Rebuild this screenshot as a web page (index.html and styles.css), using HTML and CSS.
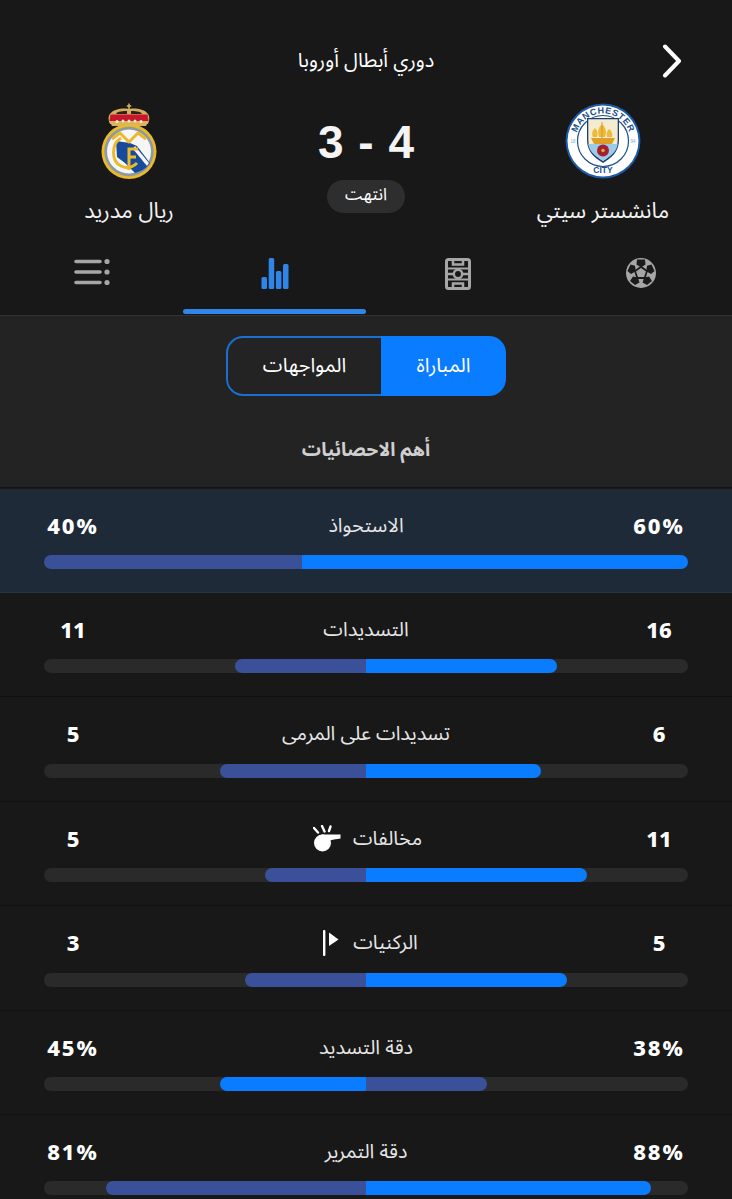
FILE: index.html
```html
<!DOCTYPE html>
<html lang="ar" dir="rtl">
<head>
<meta charset="utf-8">
<title>دوري أبطال أوروبا</title>
<link rel="stylesheet" href="styles.css">
</head>
<body>
<div class="page">
  <header class="match">
    <div class="league">
      <svg class="back" viewBox="0 0 20 34" width="20" height="34"><path d="M3 2.500 L17 17 L3 31.500" fill="none" stroke="#fff" stroke-width="4" stroke-linecap="round" stroke-linejoin="round"/></svg>
      <span>دوري أبطال أوروبا</span>
    </div>
    <div class="teams">
      <div class="team">
        <svg class="crest" viewBox="0 0 76 76" width="76" height="76">
          <defs><path id="arcTop" d="M10.500 38 A27.500 27.500 0 0 1 65.500 38"/></defs>
          <circle cx="38" cy="38" r="37.500" fill="#1c5aa6"/>
          <circle cx="38" cy="38" r="35.500" fill="#fff"/>
          <circle cx="38" cy="38" r="25.500" fill="#fff" stroke="#1c4f8c" stroke-width="1.200"/>
          <path d="M22 15 H54 V37 C54 49 46 55 38 60 C30 55 22 49 22 37 Z" fill="#1b3e70"/>
          <path d="M23.300 16.300 H52.700 V37 C52.700 48 45 53.500 38 58 C31 53.500 23.300 48 23.300 37 Z" fill="#f4ecd0"/>
          <path d="M23.300 41 H52.700 C51.700 49 45 53.500 38 58 C31 53.500 24.300 49 23.300 41 Z" fill="#9ccbe9"/>
          <path d="M26 35 H50 L47 41 H29 Z" fill="#dd9f25"/>
          <path d="M28 34 C26 30 28 27 30 25 C33 28 33 31 32 34 Z M34 34 C32 28 34 24 37 21 C41 25 42 29 40 34 Z M42 34 C41 30 42 28 44 26 C47 28 48 31 47 34 Z" fill="#f0b93a"/>
          <path d="M37 19 V35" stroke="#c88d1e" stroke-width="0.800"/>
          <circle cx="38" cy="47.500" r="6" fill="#a51e33"/>
          <circle cx="38" cy="47.500" r="1.800" fill="#e2a92b"/>
          <text class="city-ring" font-size="9" letter-spacing="0.600" direction="ltr"><textPath href="#arcTop" startOffset="50%" text-anchor="middle">MANCHESTER</textPath></text>
          <text class="city-ring" x="38" y="70" font-size="8.500" text-anchor="middle" direction="ltr">CITY</text>
          <text class="city-year" x="8" y="40" font-size="4.500" text-anchor="middle" direction="ltr">18</text>
          <text class="city-year" x="68" y="40" font-size="4.500" text-anchor="middle" direction="ltr">94</text>
        </svg>
        <div class="team-name">مانشستر سيتي</div>
      </div>
      <div class="center">
        <div class="score">3 - 4</div>
        <div class="status">انتهت</div>
      </div>
      <div class="team">
        <svg class="crest" viewBox="0 0 60 76" width="60" height="76">
          <path d="M11 21 C5 8 20 4 30 6 C40 4 55 8 49 21 Z" fill="#d2ad5e"/>
          <path d="M17 11 C18 8 25 8 28 8 V11 Z M32 8 C35 8 42 8 43 11 H32 Z" fill="#2a2418"/>
          <path d="M11.500 11.500 H48.500 L49.500 18 H10.500 Z" fill="#c9162f"/>
          <path d="M10.500 18 H49.500 L47 23 H13 Z" fill="#d9b55f"/>
          <path d="M30 0.500 V7 M27.800 3 H32.200" stroke="#d9b55f" stroke-width="1.500"/>
          <circle cx="18" cy="18.500" r="1.500" fill="#f4ecd4"/><circle cx="24" cy="18" r="1.500" fill="#f4ecd4"/><circle cx="30" cy="18" r="1.500" fill="#f4ecd4"/><circle cx="36" cy="18" r="1.500" fill="#f4ecd4"/><circle cx="42" cy="18.500" r="1.500" fill="#f4ecd4"/>
          <circle cx="30" cy="48.500" r="27.500" fill="#eab92d"/>
          <circle cx="30" cy="48.500" r="24.700" fill="#8d9aa0"/>
          <circle cx="30" cy="48.500" r="22" fill="#f6f6f6"/>
          <path d="M17 38 L31 40 L38 43 L51 60 C48 65 43 68 36 70 L26 60 L18 54 Z" fill="#174a9a"/>
          <path d="M36 43 L50 60 L48 63 L34 46 Z" fill="#f6f6f6"/>
          <path d="M13 36 L21 30 L30 39 L39 30 L47 36" fill="none" stroke="#eab92d" stroke-width="3" stroke-linejoin="round"/>
          <path d="M22 35 C12 41 12 58 22 63 C28 66 33 65 38 60" fill="none" stroke="#eab92d" stroke-width="3"/>
          <path d="M30 67 V46 H39 M30 54 H37" fill="none" stroke="#eab92d" stroke-width="3"/>
        </svg>
        <div class="team-name">ريال مدريد</div>
      </div>
    </div>
    <nav class="tabs">
      <div class="tab">
        <svg viewBox="0 0 30 30" width="30" height="30">
          <circle cx="15" cy="15" r="15" fill="#a6a6a6"/>
          <path d="M15 9.500 L10.500 6.500 L11 1.500 L19 1.500 L19.500 6.500 Z M20.200 13.300 L21 7.800 L25.500 6.500 L28.500 13 L25 16 Z M18.200 19.400 L23 18.500 L26 23 L21 27 L16.500 24.500 Z M11.800 19.400 L13.500 24.500 L9 27 L4 23 L7 18.500 Z M9.800 13.300 L5 16 L1.500 13 L4.500 6.500 L9 7.800 Z" fill="#1b1b1b"/>
          <path d="M15 9.500 L20.200 13.300 L18.200 19.400 H11.800 L9.800 13.300 Z" fill="#1b1b1b" stroke="#1b1b1b" stroke-width="3"/>
          <path d="M15 10 L20 13.500 L18 19 H12 L10 13.500 Z" fill="#a6a6a6"/>
        </svg>
      </div>
      <div class="tab">
        <svg viewBox="0 0 26 32" width="26" height="32">
          <rect x="1.500" y="1.500" width="23" height="29" rx="2" fill="none" stroke="#a6a6a6" stroke-width="3"/>
          <path d="M8 2 V6.500 H18 V2 M8 30 V25.500 H18 V30 M2 16 H9 M17 16 H24" fill="none" stroke="#a6a6a6" stroke-width="2.500"/>
          <circle cx="13" cy="16" r="4.200" fill="none" stroke="#a6a6a6" stroke-width="2.500"/>
          <path d="M3 9.500 H23 V11.500 H3 Z M3 20.500 H23 V22.500 H3 Z" fill="#a6a6a6"/>
        </svg>
      </div>
      <div class="tab tab-active">
        <svg viewBox="0 0 28 32" width="28" height="32">
          <rect x="0.500" y="19" width="5.500" height="12" rx="1.500" fill="#2f86e8"/>
          <rect x="7.700" y="0" width="5.500" height="31" rx="1.500" fill="#2f86e8"/>
          <rect x="14.900" y="13" width="5.500" height="18" rx="1.500" fill="#2f86e8"/>
          <rect x="22" y="6" width="5.500" height="25" rx="1.500" fill="#2f86e8"/>
        </svg>
      </div>
      <div class="tab">
        <svg viewBox="0 0 36 28" width="36" height="28">
          <path d="M2 3.500 H26 M2 14 H26 M2 24.500 H26" stroke="#a6a6a6" stroke-width="3.600" stroke-linecap="round"/>
          <circle cx="33" cy="3.500" r="2.600" fill="#a6a6a6"/><circle cx="33" cy="14" r="2.600" fill="#a6a6a6"/><circle cx="33" cy="24.500" r="2.600" fill="#a6a6a6"/>
        </svg>
      </div>
    </nav>
  </header>

  <section class="switcher">
    <div class="segment">
      <div class="seg seg-active">المباراة</div>
      <div class="seg seg-rest">المواجهات</div>
    </div>
    <h2 class="section-title">أهم الاحصائيات</h2>
  </section>

  <section class="stats">
    <div class="row row-hl">
      <div class="row-head"><b class="val pct">60%</b><span class="label">الاستحواذ</span><b class="val pct">40%</b></div>
      <div class="bar"><i class="fill blue" style="width:60%"></i><i class="fill navy" style="width:40%"></i></div>
    </div>
    <div class="row">
      <div class="row-head"><b class="val">16</b><span class="label">التسديدات</span><b class="val">11</b></div>
      <div class="bar"><div class="half"><i class="fill blue" style="width:59.3%"></i></div><div class="half"><i class="fill navy" style="width:40.7%"></i></div></div>
    </div>
    <div class="row">
      <div class="row-head"><b class="val">6</b><span class="label">تسديدات على المرمى</span><b class="val">5</b></div>
      <div class="bar"><div class="half"><i class="fill blue" style="width:54.5%"></i></div><div class="half"><i class="fill navy" style="width:45.5%"></i></div></div>
    </div>
    <div class="row">
      <div class="row-head"><b class="val">11</b>
        <span class="label label-whistle"><span>مخالفات</span>
          <svg viewBox="0 0 28 27" width="28" height="27"><circle cx="9.500" cy="18" r="8.500" fill="#fff"/><path d="M8 9.500 H27.500 V13.500 C24 14 21 14.500 17 15.500 Z" fill="#fff"/><path d="M9 1 L11.500 6.500 M1 3 L5 7.500 M17.500 1.500 L16 6" stroke="#fff" stroke-width="2.400" stroke-linecap="round"/></svg>
        </span><b class="val">5</b></div>
      <div class="bar"><div class="half"><i class="fill blue" style="width:68.75%"></i></div><div class="half"><i class="fill navy" style="width:31.25%"></i></div></div>
    </div>
    <div class="row">
      <div class="row-head"><b class="val">5</b>
        <span class="label label-flag"><span>الركنيات</span>
          <svg viewBox="0 0 16 26" width="16" height="26"><rect x="0" y="0" width="2.400" height="26" rx="1" fill="#fff"/><path d="M6 2.500 L15.500 9.500 L6 16 Z" fill="#fff"/></svg>
        </span><b class="val">3</b></div>
      <div class="bar"><div class="half"><i class="fill blue" style="width:62.5%"></i></div><div class="half"><i class="fill navy" style="width:37.5%"></i></div></div>
    </div>
    <div class="row">
      <div class="row-head"><b class="val pct">38%</b><span class="label">دقة التسديد</span><b class="val pct">45%</b></div>
      <div class="bar"><div class="half"><i class="fill navy" style="width:37.6%"></i></div><div class="half"><i class="fill blue" style="width:45.3%"></i></div></div>
    </div>
    <div class="row">
      <div class="row-head"><b class="val pct">88%</b><span class="label">دقة التمرير</span><b class="val pct">81%</b></div>
      <div class="bar"><div class="half"><i class="fill blue" style="width:88.5%"></i></div><div class="half"><i class="fill navy" style="width:80.7%"></i></div></div>
    </div>
  </section>
</div>
</body>
</html>
```
FILE: styles.css
```css
* { box-sizing: border-box; }
html, body { margin: 0; padding: 0; background: #181818; }
body { font-family: "Noto Sans Arabic", "DejaVu Sans", "Noto Sans", sans-serif; color: #fff; }
.page { width: 732px; height: 1199px; overflow: hidden; }

.match { height: 316px; background: #181818; border-bottom: 1px solid #333; position: relative; }
.league { height: 103px; padding-top: 44px; display: flex; justify-content: center; font-size: 20px; line-height: 34px; }
.back { position: absolute; top: 44px; right: 50px; }

.teams { display: flex; justify-content: space-between; height: 139px; }
.team { width: 258px; display: flex; flex-direction: column; align-items: center; }
.crest { display: block; flex: none; }
.team-name { margin-top: 19px; font-size: 21.800px; line-height: 26px; color: #f2f2f2; }
.center { display: flex; flex-direction: column; align-items: center; padding-top: 13px; }
.score { font-family: "Liberation Sans", sans-serif; font-weight: 700; font-size: 46px; line-height: 53px; direction: ltr; word-spacing: 2px; color: #f4f4f4; }
.status { margin-top: 11px; width: 78px; height: 33px; border-radius: 17px; background: #2e2e2e; font-size: 17px; line-height: 30px; text-align: center; }

.tabs { display: flex; height: 73px; }
.tab { flex: 1; display: flex; justify-content: center; align-items: flex-start; padding-top: 16px; position: relative; }
.tab-active::after { content: ""; position: absolute; left: 0; right: 0; bottom: 1px; height: 5px; border-radius: 3px; background: #2f86e8; }

.switcher { height: 172px; background: #232323; border-bottom: 1px solid #141414; display: flex; flex-direction: column; align-items: center; padding-top: 20px; }
.segment { display: flex; width: 280px; height: 60px; }
.seg { display: flex; align-items: center; justify-content: center; font-size: 20px; }
.seg-active { width: 125px; background: #0a7cff; border-radius: 0 17px 17px 0; }
.seg-rest { flex: 1; border: 2px solid #1a6fd0; border-right: 0; border-radius: 17px 0 0 17px; }
.section-title { margin: 36px 0 0; font-size: 19px; line-height: 36px; font-weight: 700; color: #cfcfcf; }

.stats { padding-top: 1px; }
.row { height: 104.4px; padding: 20px 44px 0; border-bottom: 1px solid #111; }
.row-hl { background: #1f2a38; border-bottom-color: #24344a; height: 104px; }
.row-head { display: flex; justify-content: space-between; align-items: center; height: 34px; }
.val { width: 58px; padding-bottom: 2px; text-align: center; font-family: "Noto Sans", sans-serif; font-weight: 800; font-size: 22px; direction: ltr; }
.pct { letter-spacing: 2px; }
.label { display: flex; align-items: center; gap: 12px; font-size: 19.800px; color: #e6e6e6; }
.label-whistle { margin-right: -3px; }
.label-flag { gap: 14px; margin-right: -9px; }
.bar { display: flex; height: 14px; margin-top: 12.400px; border-radius: 7px; background: #2a2a2a; overflow: hidden; }
.half { width: 50%; display: flex; }
.half:first-child { justify-content: flex-end; }
.fill { display: block; height: 100%; }
.blue { background: #0a7cff; }
.navy { background: #3a5199; }
.half:first-child .fill { border-radius: 0 7px 7px 0; }
.half:last-child .fill { border-radius: 7px 0 0 7px; }
.city-ring { font-family: "Liberation Sans", sans-serif; font-weight: 700; fill: #1c4f8c; }
.city-year { font-family: "Liberation Sans", sans-serif; fill: #7aa9cf; }
```
